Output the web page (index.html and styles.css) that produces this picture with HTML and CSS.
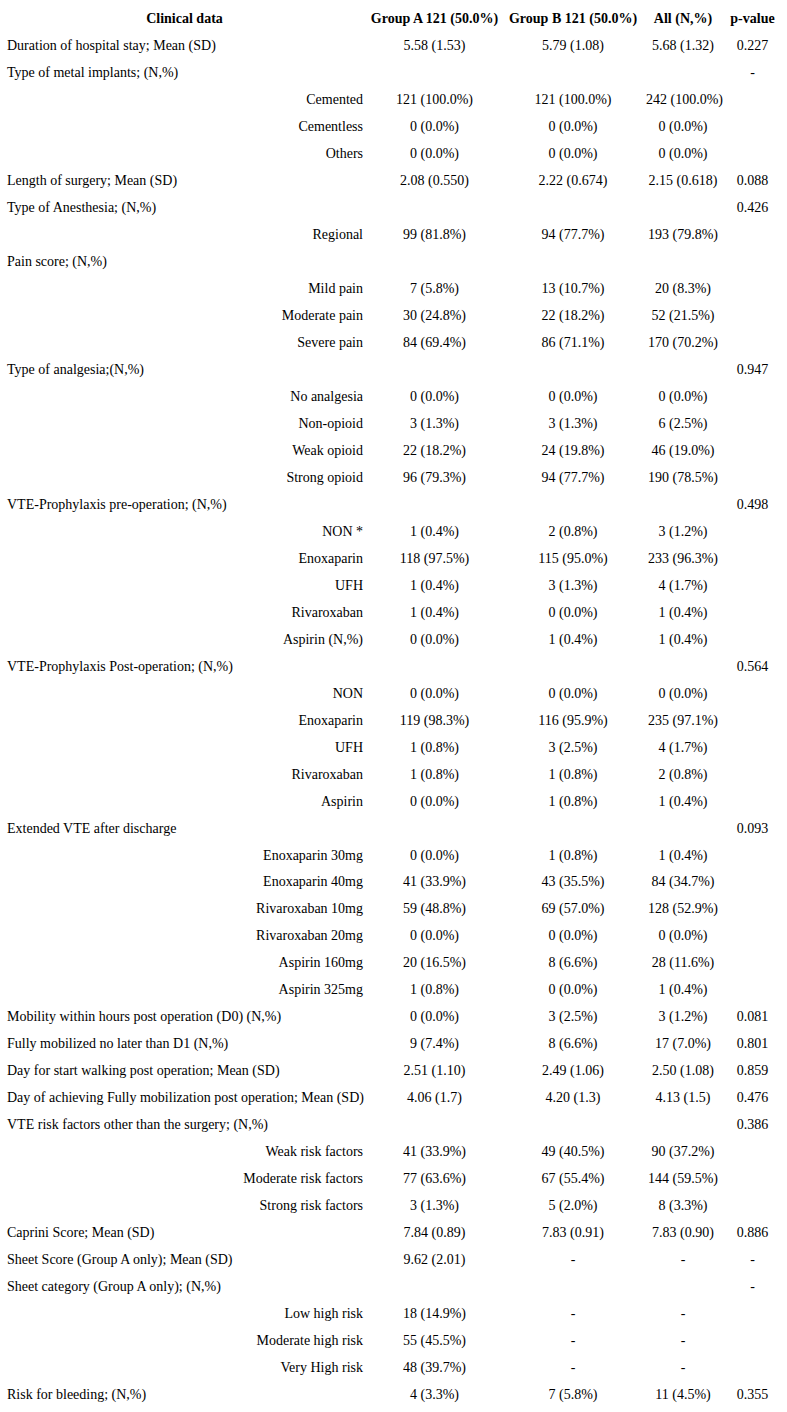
FILE: index.html
```html
<!DOCTYPE html>
<html>
<head>
<meta charset="utf-8">
<link rel="stylesheet" href="styles.css">
</head>
<body>
<table class="data">
<colgroup><col class="c1"><col class="c2"><col class="c3"><col class="c4"><col class="c5"></colgroup>
<thead>
<tr><th>Clinical data</th><th>Group A 121 (50.0%)</th><th>Group B 121 (50.0%)</th><th>All (N,%)</th><th>p-value</th></tr>
</thead>
<tbody>
<tr><td class="main">Duration of hospital stay; Mean (SD)</td><td>5.58 (1.53)</td><td>5.79 (1.08)</td><td>5.68 (1.32)</td><td>0.227</td></tr>
<tr><td class="main">Type of metal implants; (N,%)</td><td></td><td></td><td></td><td>-</td></tr>
<tr><td class="sub">Cemented</td><td>121 (100.0%)</td><td>121 (100.0%)</td><td>242 (100.0%)</td><td></td></tr>
<tr><td class="sub">Cementless</td><td>0 (0.0%)</td><td>0 (0.0%)</td><td>0 (0.0%)</td><td></td></tr>
<tr><td class="sub">Others</td><td>0 (0.0%)</td><td>0 (0.0%)</td><td>0 (0.0%)</td><td></td></tr>
<tr><td class="main">Length of surgery; Mean (SD)</td><td>2.08 (0.550)</td><td>2.22 (0.674)</td><td>2.15 (0.618)</td><td>0.088</td></tr>
<tr><td class="main">Type of Anesthesia; (N,%)</td><td></td><td></td><td></td><td>0.426</td></tr>
<tr><td class="sub">Regional</td><td>99 (81.8%)</td><td>94 (77.7%)</td><td>193 (79.8%)</td><td></td></tr>
<tr><td class="main">Pain score; (N,%)</td><td></td><td></td><td></td><td></td></tr>
<tr><td class="sub">Mild pain</td><td>7 (5.8%)</td><td>13 (10.7%)</td><td>20 (8.3%)</td><td></td></tr>
<tr><td class="sub">Moderate pain</td><td>30 (24.8%)</td><td>22 (18.2%)</td><td>52 (21.5%)</td><td></td></tr>
<tr><td class="sub">Severe pain</td><td>84 (69.4%)</td><td>86 (71.1%)</td><td>170 (70.2%)</td><td></td></tr>
<tr><td class="main">Type of analgesia;(N,%)</td><td></td><td></td><td></td><td>0.947</td></tr>
<tr><td class="sub">No analgesia</td><td>0 (0.0%)</td><td>0 (0.0%)</td><td>0 (0.0%)</td><td></td></tr>
<tr><td class="sub">Non-opioid</td><td>3 (1.3%)</td><td>3 (1.3%)</td><td>6 (2.5%)</td><td></td></tr>
<tr><td class="sub">Weak opioid</td><td>22 (18.2%)</td><td>24 (19.8%)</td><td>46 (19.0%)</td><td></td></tr>
<tr><td class="sub">Strong opioid</td><td>96 (79.3%)</td><td>94 (77.7%)</td><td>190 (78.5%)</td><td></td></tr>
<tr><td class="main">VTE-Prophylaxis pre-operation; (N,%)</td><td></td><td></td><td></td><td>0.498</td></tr>
<tr><td class="sub">NON *</td><td>1 (0.4%)</td><td>2 (0.8%)</td><td>3 (1.2%)</td><td></td></tr>
<tr><td class="sub">Enoxaparin</td><td>118 (97.5%)</td><td>115 (95.0%)</td><td>233 (96.3%)</td><td></td></tr>
<tr><td class="sub">UFH</td><td>1 (0.4%)</td><td>3 (1.3%)</td><td>4 (1.7%)</td><td></td></tr>
<tr><td class="sub">Rivaroxaban</td><td>1 (0.4%)</td><td>0 (0.0%)</td><td>1 (0.4%)</td><td></td></tr>
<tr><td class="sub">Aspirin (N,%)</td><td>0 (0.0%)</td><td>1 (0.4%)</td><td>1 (0.4%)</td><td></td></tr>
<tr><td class="main">VTE-Prophylaxis Post-operation; (N,%)</td><td></td><td></td><td></td><td>0.564</td></tr>
<tr><td class="sub">NON</td><td>0 (0.0%)</td><td>0 (0.0%)</td><td>0 (0.0%)</td><td></td></tr>
<tr><td class="sub">Enoxaparin</td><td>119 (98.3%)</td><td>116 (95.9%)</td><td>235 (97.1%)</td><td></td></tr>
<tr><td class="sub">UFH</td><td>1 (0.8%)</td><td>3 (2.5%)</td><td>4 (1.7%)</td><td></td></tr>
<tr><td class="sub">Rivaroxaban</td><td>1 (0.8%)</td><td>1 (0.8%)</td><td>2 (0.8%)</td><td></td></tr>
<tr><td class="sub">Aspirin</td><td>0 (0.0%)</td><td>1 (0.8%)</td><td>1 (0.4%)</td><td></td></tr>
<tr><td class="main">Extended VTE after discharge</td><td></td><td></td><td></td><td>0.093</td></tr>
<tr><td class="sub">Enoxaparin 30mg</td><td>0 (0.0%)</td><td>1 (0.8%)</td><td>1 (0.4%)</td><td></td></tr>
<tr><td class="sub">Enoxaparin 40mg</td><td>41 (33.9%)</td><td>43 (35.5%)</td><td>84 (34.7%)</td><td></td></tr>
<tr><td class="sub">Rivaroxaban 10mg</td><td>59 (48.8%)</td><td>69 (57.0%)</td><td>128 (52.9%)</td><td></td></tr>
<tr><td class="sub">Rivaroxaban 20mg</td><td>0 (0.0%)</td><td>0 (0.0%)</td><td>0 (0.0%)</td><td></td></tr>
<tr><td class="sub">Aspirin 160mg</td><td>20 (16.5%)</td><td>8 (6.6%)</td><td>28 (11.6%)</td><td></td></tr>
<tr><td class="sub">Aspirin 325mg</td><td>1 (0.8%)</td><td>0 (0.0%)</td><td>1 (0.4%)</td><td></td></tr>
<tr><td class="main">Mobility within hours post operation (D0) (N,%)</td><td>0 (0.0%)</td><td>3 (2.5%)</td><td>3 (1.2%)</td><td>0.081</td></tr>
<tr><td class="main">Fully mobilized no later than D1 (N,%)</td><td>9 (7.4%)</td><td>8 (6.6%)</td><td>17 (7.0%)</td><td>0.801</td></tr>
<tr><td class="main">Day for start walking post operation; Mean (SD)</td><td>2.51 (1.10)</td><td>2.49 (1.06)</td><td>2.50 (1.08)</td><td>0.859</td></tr>
<tr><td class="main">Day of achieving Fully mobilization post operation; Mean (SD)</td><td>4.06 (1.7)</td><td>4.20 (1.3)</td><td>4.13 (1.5)</td><td>0.476</td></tr>
<tr><td class="main">VTE risk factors other than the surgery; (N,%)</td><td></td><td></td><td></td><td>0.386</td></tr>
<tr><td class="sub">Weak risk factors</td><td>41 (33.9%)</td><td>49 (40.5%)</td><td>90 (37.2%)</td><td></td></tr>
<tr><td class="sub">Moderate risk factors</td><td>77 (63.6%)</td><td>67 (55.4%)</td><td>144 (59.5%)</td><td></td></tr>
<tr><td class="sub">Strong risk factors</td><td>3 (1.3%)</td><td>5 (2.0%)</td><td>8 (3.3%)</td><td></td></tr>
<tr><td class="main">Caprini Score; Mean (SD)</td><td>7.84 (0.89)</td><td>7.83 (0.91)</td><td>7.83 (0.90)</td><td>0.886</td></tr>
<tr><td class="main">Sheet Score (Group A only); Mean (SD)</td><td>9.62 (2.01)</td><td>-</td><td>-</td><td>-</td></tr>
<tr><td class="main">Sheet category (Group A only); (N,%)</td><td></td><td></td><td></td><td>-</td></tr>
<tr><td class="sub">Low high risk</td><td>18 (14.9%)</td><td>-</td><td>-</td><td></td></tr>
<tr><td class="sub">Moderate high risk</td><td>55 (45.5%)</td><td>-</td><td>-</td><td></td></tr>
<tr><td class="sub">Very High risk</td><td>48 (39.7%)</td><td>-</td><td>-</td><td></td></tr>
<tr><td class="main">Risk for bleeding; (N,%)</td><td>4 (3.3%)</td><td>7 (5.8%)</td><td>11 (4.5%)</td><td>0.355</td></tr>
</tbody>
</table>
</body>
</html>
```
FILE: styles.css
```css
html, body {
  margin: 0;
  padding: 0;
  background: #ffffff;
}
body {
  font-family: "Liberation Serif", "Times New Roman", serif;
  font-size: 14px;
  color: #000000;
}
.data {
  border-collapse: collapse;
  table-layout: fixed;
  width: 785px;
  margin-top: 6px;
}
.c1 { width: 369px; }
.c2 { width: 131px; }
.c3 { width: 146px; }
.c4 { width: 74px; }
.c5 { width: 65px; }
.data th,
.data td {
  height: 26.98px;
  padding: 0;
  text-align: center;
  vertical-align: middle;
  white-space: nowrap;
  line-height: 16px;
}
.data th {
  font-weight: bold;
}
.data td.main {
  text-align: left;
  padding-left: 7px;
}
.data td.sub {
  text-align: right;
  padding-right: 6px;
}
```
